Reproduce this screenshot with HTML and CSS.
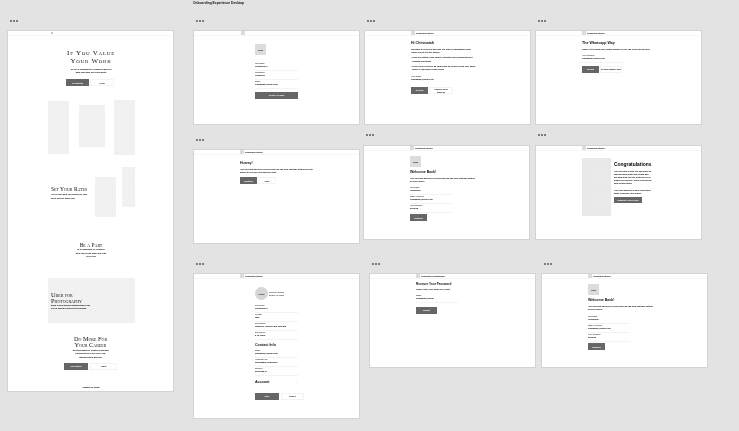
FILE: index.html
```html
<!DOCTYPE html>
<html lang="en">
<head>
<meta charset="utf-8">
<title>Onboarding Experience Desktop</title>
<link rel="stylesheet" href="styles.css">
</head>
<body>
<main class="canvas">
  <div class="canvas-title">Onboarding Experience Desktop</div>

  <section class="frame f1">
    <div class="dots"><i></i><i></i><i></i></div>
    <div class="board b1">
      <div class="topbar tb-1"><span class="logo-dot"></span></div>
      <div class="land-hero">
        <h1 class="serif-lg">If You Value<br>Your Work</h1>
        <p class="mini">We are a community of creatives who get<br>paid what they are really worth</p>
        <div class="btns center-row"><span class="btn dark w23">Get Started</span><span class="btn light w24">Learn</span></div>
      </div>
      <div class="collage">
        <div class="pic p-a"></div><div class="pic p-b"></div><div class="pic p-c"></div>
      </div>
      <div class="rates">
        <div class="rates-text">
          <h2 class="serif-md">Set Your Rates</h2>
          <p class="mini">You decide what you charge for your<br>work, and we make sure</p>
        </div>
        <div class="pic p-d"></div>
        <div class="pic p-e"></div>
      </div>
      <div class="part">
        <h2 class="serif-md">Be a Part</h2>
        <p class="mini">of a community of creatives<br>who value each other and craft<br>every day</p>
      </div>
      <div class="pic banner">
        <h2 class="serif-lg2">Uber for<br>Photography</h2>
        <p class="mini">Book a professional photographer near<br>you in minutes and get your photos</p>
      </div>
      <div class="more">
        <h2 class="serif-lg2">Do More For<br>Your Career</h2>
        <p class="mini">Join thousands of creatives building<br>a business they love every day<br>starting with a booking</p>
        <div class="btns center-row more-btns"><span class="btn dark w24">Get Started</span><span class="btn light w27">Learn</span></div>
      </div>
      <div class="foot mini">Contact Us Today</div>
    </div>
  </section>

  <section class="frame f2">
    <div class="dots"><i></i><i></i><i></i></div>
    <div class="board b-sm">
      <div class="topbar tb-48"><span class="logo-sq"></span></div>
      <div class="content c-62 pt-9">
        <div class="avatar-sq"><span>Logo</span></div>
        <div class="fields mt-7">
          <div class="field"><label>Username</label><b>Chinmaiah K</b></div>
          <div class="field"><label>Password</label><b>Password</b></div>
          <div class="field"><label>Email</label><b>chinmaiah@gmail.com</b></div>
        </div>
        <div class="btns mt-3"><span class="btn dark wide">Create Account</span></div>
      </div>
    </div>
  </section>

  <section class="frame f3">
    <div class="dots"><i></i><i></i><i></i></div>
    <div class="board b-sm">
      <div class="topbar tb-47"><span class="logo-sq"></span><span class="brand">Chinmaiah Studio</span></div>
      <div class="content c-47 pt-7">
        <h3 class="head">Hi Chinmaiah</h3>
        <p class="mini dark-t mt-2">Welcome to your new account. We sent a confirmation email<br>Please check it to get started</p>
        <p class="mini dark-t mt-2">• Click the button in the email to activate your account and get<br>&nbsp;&nbsp;booking right away</p>
        <p class="mini dark-t mt-2">• If you did not receive an email from us, please check your spam<br>&nbsp;&nbsp;folder or resend the email below</p>
        <div class="field mt-4 w42 noline"><label>Your Email</label><b>chinmaiah@gmail.com</b></div>
        <div class="btns mt-3"><span class="btn dark w17">Resend</span><span class="btn light w24 two">Change email<br>address</span></div>
      </div>
    </div>
  </section>

  <section class="frame f4">
    <div class="dots"><i></i><i></i><i></i></div>
    <div class="board b-sm">
      <div class="topbar tb-46"><span class="logo-sq"></span><span class="brand">Chinmaiah Studio</span></div>
      <div class="content c-46 pt-7">
        <h3 class="head">The Whatsapp Way</h3>
        <p class="mini dark-t mt-2">Please let us know your phone number so we can reach you for jobs</p>
        <div class="field mt-3 w42"><label>Your Number</label><b>chinmaiah@gmail.com</b></div>
        <div class="btns mt-3"><span class="btn dark w17">Submit</span><span class="btn light w22">Do this another time</span></div>
      </div>
    </div>
  </section>

  <section class="frame f5">
    <div class="dots"><i></i><i></i><i></i></div>
    <div class="board b-sm">
      <div class="topbar tb-47"><span class="logo-sq"></span><span class="brand">Chinmaiah Studio</span></div>
      <div class="content c-47 pt-9">
        <h3 class="head">Hurray!</h3>
        <p class="mini dark-t mt-2">Your account has been verified and you can now continue setting up your<br>profile to get your first booking soon</p>
        <div class="btns mt-3"><span class="btn dark w17">Continue</span><span class="btn light w18">Later</span></div>
      </div>
    </div>
  </section>

  <section class="frame f6">
    <div class="dots"><i></i><i></i><i></i></div>
    <div class="board b-sm">
      <div class="topbar tb-47"><span class="logo-sq"></span><span class="brand">Chinmaiah Studio</span></div>
      <div class="content c-47 pt-5">
        <div class="avatar-sq"><span>Logo</span></div>
        <h3 class="head mt-3">Welcome Back!</h3>
        <p class="mini dark-t mt-2">Your account has been verified and you can now continue setting<br>up your profile</p>
        <div class="fields mt-3 w42s">
          <div class="field"><label>Username</label><b>Chinmaiah</b></div>
          <div class="field"><label>Email Address</label><b>chinmaiah@gmail.com</b></div>
          <div class="field"><label>Your Number</label><b>9845012</b></div>
        </div>
        <div class="btns mt-1"><span class="btn dark w17">Continue</span></div>
      </div>
    </div>
  </section>

  <section class="frame f7">
    <div class="dots"><i></i><i></i><i></i></div>
    <div class="board b-sm">
      <div class="topbar tb-46"><span class="logo-sq"></span><span class="brand">Chinmaiah Studio</span></div>
      <div class="congrats">
        <div class="pic p-tall"></div>
        <div class="congrats-text">
          <h3 class="head-lg">Congratulations</h3>
          <p class="mini dark-t mt-2">Your account is now live and ready to<br>start booking with your clients and<br>get paid what you are worth on every<br>single job you take. Share your profile<br>with friends today</p>
          <p class="mini dark-t mt-4">Your first booking is only a few steps<br>away, complete your profile</p>
          <div class="btns mt-2"><span class="btn dark w28 short">Complete Your Profile</span></div>
        </div>
      </div>
    </div>
  </section>

  <section class="frame f8">
    <div class="dots"><i></i><i></i><i></i></div>
    <div class="board b-lg">
      <div class="topbar tb-46"><span class="logo-sq"></span><span class="brand">Chinmaiah Studio</span></div>
      <div class="content c-62 pt-9">
        <div class="profile">
          <div class="avatar-round"><span>Photo</span></div>
          <p class="tiny">Upload a profile<br>picture of yours</p>
        </div>
        <div class="fields mt-4">
          <div class="field"><label>Full Name</label><b>Chinmaiah K</b></div>
          <div class="field"><label>Gender</label><b>Male</b></div>
          <div class="field"><label>Specialties</label><b>Wedding, Fashion and Portraits</b></div>
          <div class="field"><label>Experience</label><b>6-10 years</b></div>
        </div>
        <h3 class="head mt-3">Contact Info</h3>
        <div class="fields mt-1">
          <div class="field"><label>Email</label><b>chinmaiah@gmail.com</b></div>
          <div class="field"><label>Address Line</label><b>Indiranagar, Bengaluru</b></div>
          <div class="field"><label>Number</label><b>9845012345</b></div>
        </div>
        <div class="account mt-4"><h3 class="head">Account</h3><span class="chev">⌄</span></div>
        <div class="btns account-btns"><span class="btn dark w24">Save</span><span class="btn light w23">Cancel</span></div>
      </div>
    </div>
  </section>

  <section class="frame f9">
    <div class="dots"><i></i><i></i><i></i></div>
    <div class="board b-sm">
      <div class="topbar tb-46"><span class="logo-sq"></span><span class="brand">Chinmaiah Photography</span></div>
      <div class="content c-47 pt-3">
        <h3 class="head head-narrow">Recover Your Password</h3>
        <p class="mini dark-t mt-1">Please enter your email for a reset</p>
        <div class="field mt-3 w42"><label>Email</label><b>chinmaiah@gmail</b></div>
        <div class="btns mt-4"><span class="btn dark w21">Submit</span></div>
      </div>
    </div>
  </section>

  <section class="frame f10">
    <div class="dots"><i></i><i></i><i></i></div>
    <div class="board b-sm">
      <div class="topbar tb-46"><span class="logo-sq"></span><span class="brand">Chinmaiah Studio</span></div>
      <div class="content c-46 pt-5">
        <div class="avatar-sq"><span>Logo</span></div>
        <h3 class="head mt-3">Welcome Back!</h3>
        <p class="mini dark-t mt-2">Your account has been verified and you can now continue setting<br>up your profile</p>
        <div class="fields mt-4 w42s">
          <div class="field"><label>Username</label><b>Chinmaiah</b></div>
          <div class="field"><label>Email Address</label><b>chinmaiah@gmail.com</b></div>
          <div class="field"><label>Your Number</label><b>9845012</b></div>
        </div>
        <div class="btns mt-1"><span class="btn dark w17">Continue</span></div>
      </div>
    </div>
  </section>
</main>
</body>
</html>
```
FILE: styles.css
```css
* { box-sizing: border-box; margin: 0; padding: 0; }
html, body { width: 739px; height: 431px; overflow: hidden; }
body { background: #e3e3e3; font-family: "Liberation Sans", Arial, sans-serif; color: #111; }
.canvas { position: relative; width: 739px; height: 431px; filter: blur(.25px); }
.canvas-title { position: absolute; left: 193px; top: 1px; font-size: 3.3px; line-height: 4px; font-weight: 700; color: #111; white-space: nowrap; }

.frame { position: absolute; width: 167px; }
.f1 { left: 7px; top: 20px; }
.f2 { left: 193px; top: 20px; }
.f3 { left: 364px; top: 20px; }
.f4 { left: 535px; top: 20px; }
.f5 { left: 193px; top: 139px; }
.f6 { left: 363px; top: 134px; }
.f7 { left: 535px; top: 134px; }
.f8 { left: 193px; top: 263px; }
.f9 { left: 369px; top: 263px; }
.f10 { left: 541px; top: 263px; }
.f6 .board, .f7 .board { margin-top: 9px; }

.dots { display: flex; gap: 1px; height: 10px; padding: 0 0 0 3px; }
.dots i { width: 2px; height: 2px; background: #7c7c7c; }
.f6 .dots, .f7 .dots { height: 2px; }

.board { background: #fff; border: 1px solid #d3d3d3; width: 167px; overflow: hidden; }
.b1 { height: 362px; }
.b-sm { height: 95px; }
.b-lg { height: 146px; }

.topbar { height: 5px; display: flex; align-items: center; gap: 1px; border-bottom: 1px solid #f6f6f6; }
.tb-1 { padding-left: 43px; }
.tb-46 { padding-left: 46px; }
.tb-47 { padding-left: 46px; }
.tb-48 { padding-left: 47px; }
.logo-dot { width: 2px; height: 2px; background: #c4c4c4; }
.logo-sq { width: 4px; height: 4px; background: #dcdcdc; flex: none; }
.brand { font-size: 2.1px; font-weight: 700; white-space: nowrap; line-height: 3px; color: #000; }

.mini { font-size: 2.1px; line-height: 3.2px; font-weight: 700; color: #000; white-space: nowrap; }
.dark-t { color: #000; }
.tiny { font-size: 2px; line-height: 2.6px; color: #444; white-space: nowrap; font-weight: 700; }

.serif-lg, .serif-lg2, .serif-md { font-family: "Liberation Serif", "Times New Roman", serif; font-variant: small-caps; font-weight: 400; color: #111; white-space: nowrap; }
.serif-lg { font-size: 7px; line-height: 8px; letter-spacing: .75px; }
.serif-lg2 { font-size: 6.3px; line-height: 5.6px; }
.serif-md { font-size: 5.5px; line-height: 6px; }

.land-hero { display: flex; flex-direction: column; align-items: center; text-align: center; padding-top: 13px; padding-left: 1px; }
.land-hero .mini { margin-top: 3px; }
.btns { display: flex; gap: 1px; }
.center-row { justify-content: center; }
.land-hero .btns { margin: 5px 0 0 -2px; }
.btn { display: flex; align-items: center; justify-content: center; height: 7px; font-size: 2.1px; line-height: 2.5px; font-weight: 700; white-space: nowrap; text-align: center; }
.btn.dark { background: #666; color: #fff; }
.btn.light { background: #fff; border: 1px solid #f3f3f3; color: #111; }
.w17 { width: 17px; } .w18 { width: 18px; } .w21 { width: 21px; } .w22 { width: 22px; }
.w23 { width: 23px; } .w24 { width: 24px; } .w27 { width: 27px; } .w28 { width: 28px; }
.short { height: 6px; }
.wide { width: 43px; }

.pic { background-color: #f1f1f1; background-image: radial-gradient(#ebebeb .5px, transparent .6px); background-size: 5px 5px; }
.collage { display: flex; align-items: flex-start; padding: 14px 0 0 40px; height: 80px; }
.p-a { width: 21px; height: 53px; margin-top: 1px; }
.p-b { width: 26px; height: 42px; margin: 5px 0 0 10px; }
.p-c { width: 21px; height: 55px; margin-left: 9px; }

.rates { display: flex; align-items: flex-start; padding-left: 43px; height: 57px; margin-top: 1px; }
.rates-text { width: 44px; padding-top: 19px; }
.rates-text .mini { margin-top: 1px; }
.p-d { width: 21px; height: 40px; margin-top: 10px; }
.p-e { width: 13px; height: 40px; margin-left: 6px; }

.part { display: flex; flex-direction: column; align-items: center; text-align: center; padding-left: 1px; margin-top: 18px; }
.banner { width: 87px; height: 45px; margin: 20px 0 0 40px; padding: 14px 0 0 3px; }
.banner .mini { margin-top: 1px; }
.more { display: flex; flex-direction: column; align-items: center; text-align: center; padding-top: 13px; }
.more .serif-lg2 { line-height: 6px; }
.more .mini { margin-top: 1px; line-height: 3.4px; }
.more-btns { margin-top: 4px; gap: 2px; }
.foot { text-align: center; margin-top: 16px; padding-left: 1px; color: #000; }

.content { display: flex; flex-direction: column; align-items: flex-start; }
.c-62 { padding-left: 61px; }
.c-47 { padding-left: 46px; }
.c-46 { padding-left: 46px; }
.pt-3 { padding-top: 3px; } .pt-5 { padding-top: 5px; } .pt-7 { padding-top: 5px; } .pt-9 { padding-top: 8px; }
.f5 .pt-9 { padding-top: 6px; }
.mt-1 { margin-top: 1px; } .mt-2 { margin-top: 2px; } .mt-3 { margin-top: 3px; } .mt-4 { margin-top: 4px; } .mt-7 { margin-top: 7px; }

.head { font-size: 3.6px; line-height: 5px; font-weight: 700; white-space: nowrap; color: #111; }
.head-narrow { font-size: 3.1px; }
.head-lg { font-size: 4.9px; line-height: 7px; font-weight: 700; white-space: nowrap; color: #000; }

.avatar-sq { width: 11px; height: 11px; background: #dcdcdc; display: flex; align-items: center; justify-content: center; font-size: 2.1px; font-weight: 700; color: #111; }
.avatar-round { width: 13px; height: 13px; border-radius: 50%; background: #d6d6d6; display: flex; align-items: center; justify-content: center; font-size: 2.1px; font-weight: 700; color: #111; flex: none; }
.profile { display: flex; align-items: center; gap: 1px; }

.fields { display: flex; flex-direction: column; }
.field { display: flex; flex-direction: column; width: 43px; height: 9px; border-bottom: 1px solid #f3f3f3; white-space: nowrap; }
.field label { font-size: 2px; line-height: 3px; color: #444; font-weight: 700; }
.field b { font-size: 2.1px; line-height: 3px; color: #000; }
.w42 { width: 42px; }
.w42s .field { width: 42px; }
.noline { border-bottom: 0; }

.congrats { display: flex; align-items: flex-start; padding: 7px 0 0 46px; }
.p-tall { width: 29px; height: 58px; background-color: #e9e9e9; background-size: 3px 3px; }
.congrats-text { padding: 3px 0 0 3px; }
.congrats-text .mini { line-height: 3px; }

.account { display: flex; align-items: center; justify-content: space-between; width: 43px; }
.chev { font-size: 3px; line-height: 3px; color: #aaa; }
.account-btns { margin-top: 8px; gap: 2px; }
```
